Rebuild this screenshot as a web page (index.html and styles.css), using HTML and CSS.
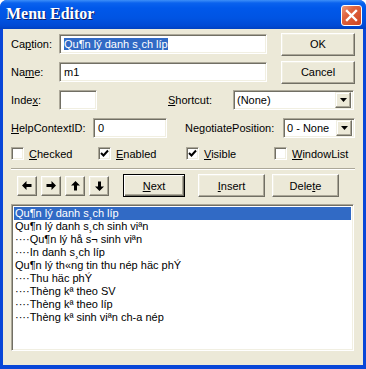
FILE: index.html
```html
<!DOCTYPE html>
<html lang="en">
<head>
    <meta charset="UTF-8">
    <title>Menu Editor</title>
    <link rel="stylesheet" href="styles.css">
</head>
<body>
<div class="window">
    <div class="titlebar">
        <span class="title">Menu Editor</span>
        <span class="close">
            <svg width="21" height="21" viewBox="0 0 21 21">
                <path d="M6 6 L15 15 M15 6 L6 15" stroke="#fff" stroke-width="2.4" stroke-linecap="square"/>
            </svg>
        </span>
    </div>

    <div class="client">
        <div class="row">
            <span class="lbl w48">Ca<u>p</u>tion:</span>
            <div class="textbox caption"><span class="sel">Qu¶n lý danh s¸ch líp</span></div>
            <div class="btn side">OK</div>
        </div>
        <div class="row">
            <span class="lbl w48">Na<u>m</u>e:</span>
            <div class="textbox caption">m1</div>
            <div class="btn side">Cancel</div>
        </div>
        <div class="row">
            <span class="lbl w48">Inde<u>x</u>:</span>
            <div class="textbox index"></div>
            <span class="lbl shortcut"><u>S</u>hortcut:</span>
            <div class="combo wide-combo">
                <span class="combo-text">(None)</span>
                <span class="drop"><svg width="7" height="4" viewBox="0 0 7 4"><path d="M0 0h7L3.5 4z" fill="#000"/></svg></span>
            </div>
        </div>
        <div class="row">
            <span class="lbl help"><u>H</u>elpContextID:</span>
            <div class="textbox helpid">0</div>
            <span class="lbl negotiate">Ne<u>g</u>otiatePosition:</span>
            <div class="combo small-combo">
                <span class="combo-text">0 - None</span>
                <span class="drop"><svg width="7" height="4" viewBox="0 0 7 4"><path d="M0 0h7L3.5 4z" fill="#000"/></svg></span>
            </div>
        </div>

        <div class="checks">
            <div class="check"><span class="box"></span><span><u>C</u>hecked</span></div>
            <div class="check"><span class="box"><svg width="9" height="9" viewBox="0 0 9 9"><path d="M1 4 L3.5 6.5 L8 1.5" stroke="#000" stroke-width="2" fill="none"/></svg></span><span><u>E</u>nabled</span></div>
            <div class="check"><span class="box"><svg width="9" height="9" viewBox="0 0 9 9"><path d="M1 4 L3.5 6.5 L8 1.5" stroke="#000" stroke-width="2" fill="none"/></svg></span><span><u>V</u>isible</span></div>
            <div class="check"><span class="box"></span><span><u>W</u>indowList</span></div>
        </div>

        <div class="separator"></div>

        <div class="toolrow">
            <div class="btn arrow"><svg width="10" height="9" viewBox="0 0 10 9"><path d="M0 4.5 L4.5 0 V3 H9.5 V6 H4.5 V9 Z" fill="#000"/></svg></div>
            <div class="btn arrow"><svg width="10" height="9" viewBox="0 0 10 9"><path d="M10 4.5 L5.5 0 V3 H0.5 V6 H5.5 V9 Z" fill="#000"/></svg></div>
            <div class="btn arrow"><svg width="9" height="10" viewBox="0 0 9 10"><path d="M4.5 0 L9 4.5 H6 V9.5 H3 V4.5 H0 Z" fill="#000"/></svg></div>
            <div class="btn arrow"><svg width="9" height="10" viewBox="0 0 9 10"><path d="M4.5 10 L9 5.5 H6 V0.5 H3 V5.5 H0 Z" fill="#000"/></svg></div>
            <div class="btn default next"><span><u>N</u>ext</span></div>
            <div class="btn insert"><span><u>I</u>nsert</span></div>
            <div class="btn delete"><span>Dele<u>t</u>e</span></div>
        </div>

        <div class="listbox">
            <div class="item selected">Qu¶n lý danh s¸ch líp</div>
            <div class="item">Qu¶n lý danh s¸ch sinh viªn</div>
            <div class="item">····Qu¶n lý hå s¬ sinh viªn</div>
            <div class="item">····In danh s¸ch líp</div>
            <div class="item">Qu¶n lý th«ng tin thu nép häc phÝ</div>
            <div class="item">····Thu häc phÝ</div>
            <div class="item">····Thèng kª theo SV</div>
            <div class="item">····Thèng kª theo líp</div>
            <div class="item">····Thèng kª sinh viªn ch-a nép</div>
        </div>
    </div>
</div>
</body>
</html>
```

FILE: styles.css
```css
body {
    margin: 0;
    background: #fff;
    font-family: "Liberation Sans", Arial, sans-serif;
    font-size: 11px;
    color: #000;
}
.window {
    width: 366px;
    height: 369px;
    background: #0846d8;
    border-radius: 7px 7px 0 0;
    overflow: hidden;
    display: flex;
    flex-direction: column;
}
.titlebar {
    height: 29px;
    flex: none;
    display: flex;
    align-items: center;
    justify-content: space-between;
    padding: 0 4px 0 6px;
    background: linear-gradient(#3d8ff8 0, #0a62ee 3px, #0058ea 8px, #0054e3 18px, #0049d4 26px, #0040c0 29px);
}
.title {
    font-family: "Liberation Serif", "Times New Roman", serif;
    font-weight: bold;
    font-size: 16px;
    color: #fff;
    text-shadow: 1px 1px 0 #0a1e6a;
    padding-bottom: 1px;
}
.close {
    width: 21px;
    height: 21px;
    box-sizing: border-box;
    border: 1px solid #fff;
    border-radius: 3px;
    background: linear-gradient(135deg, #ec9b7e 0, #e0643f 35%, #cf4420 100%);
    display: flex;
    align-items: center;
    justify-content: center;
    margin-top: 1px;
}
.close svg {
    margin: -1px;
}
.client {
    flex: 1;
    background: #ece9d8;
    margin: 0 3px 4px 3px;
    padding: 1px 8px 0 8px;
}
.row {
    display: flex;
    align-items: center;
    height: 28px;
}
.lbl {
    flex: none;
    white-space: nowrap;
}
.w48 { width: 48px; }
.help { width: 82px; }
.shortcut {
    margin-left: 71px;
    width: 65px;
}
.negotiate {
    margin-left: 18px;
    width: 98px;
}
.textbox, .combo, .listbox {
    box-sizing: border-box;
    background: #fff;
    border: 1px solid;
    border-color: #aca899 #fff #fff #aca899;
    box-shadow: inset 1px 1px 0 #716f64, inset -1px -1px 0 #f1efe2;
}
.textbox {
    height: 20px;
    padding: 3px 3px 0 4px;
    line-height: 13px;
    white-space: nowrap;
    overflow: hidden;
}
.caption { width: 208px; }
.index { width: 38px; }
.helpid { width: 74px; }
.sel {
    background: #316ac5;
    color: #fff;
}
.btn {
    box-sizing: border-box;
    background: #ece9d8;
    border: 1px solid;
    border-color: #fff #716f64 #716f64 #fff;
    box-shadow: inset -1px -1px 0 #aca899, inset 1px 1px 0 #f1efe2;
    display: flex;
    align-items: center;
    justify-content: center;
    flex: none;
}
.side {
    width: 74px;
    height: 23px;
    margin-left: 14px;
}
.combo {
    height: 20px;
    display: flex;
    align-items: center;
    padding: 2px;
}
.wide-combo { width: 121px; }
.small-combo { width: 72px; }
.combo-text {
    flex: 1;
    padding-left: 1px;
    white-space: nowrap;
    overflow: hidden;
}
.drop {
    flex: none;
    width: 16px;
    height: 16px;
    box-sizing: border-box;
    border: 1px solid;
    border-color: #f1efe2 #716f64 #716f64 #f1efe2;
    box-shadow: inset -1px -1px 0 #aca899, inset 1px 1px 0 #fff;
    background: #ece9d8;
    display: flex;
    align-items: center;
    justify-content: center;
}
.checks {
    display: grid;
    grid-template-columns: 87px 88px 88px auto;
    height: 23px;
    align-items: center;
}
.check {
    display: flex;
    align-items: center;
    gap: 5px;
}
.box {
    width: 13px;
    height: 13px;
    box-sizing: border-box;
    background: #fff;
    border: 1px solid;
    border-color: #aca899 #fff #fff #aca899;
    box-shadow: inset 1px 1px 0 #716f64, inset -1px -1px 0 #f1efe2;
    display: flex;
    align-items: center;
    justify-content: center;
}
.separator {
    margin-top: 3px;
    width: 344px;
    border-top: 1px solid #aca899;
    border-bottom: 1px solid #fff;
    height: 0;
}
.toolrow {
    display: flex;
    align-items: center;
    height: 23px;
    margin-top: 4px;
}
.arrow {
    width: 20px;
    height: 20px;
    margin-left: 4px;
}
.arrow:first-child { margin-left: 6px; }
.default {
    border: 1px solid #000;
    box-shadow: inset 1px 1px 0 #fff, inset -1px -1px 0 #716f64, inset -2px -2px 0 #aca899;
}
.next {
    width: 62px;
    height: 23px;
    margin-left: 14px;
}
.insert {
    width: 67px;
    height: 23px;
    margin-left: 13px;
}
.delete {
    width: 67px;
    height: 23px;
    margin-left: 7px;
}
.listbox {
    margin-top: 7px;
    width: 343px;
    height: 147px;
    padding: 2px;
}
.item {
    height: 13px;
    line-height: 13px;
    padding-left: 1px;
    white-space: nowrap;
}
.selected {
    background: #316ac5;
    color: #fff;
}
```
